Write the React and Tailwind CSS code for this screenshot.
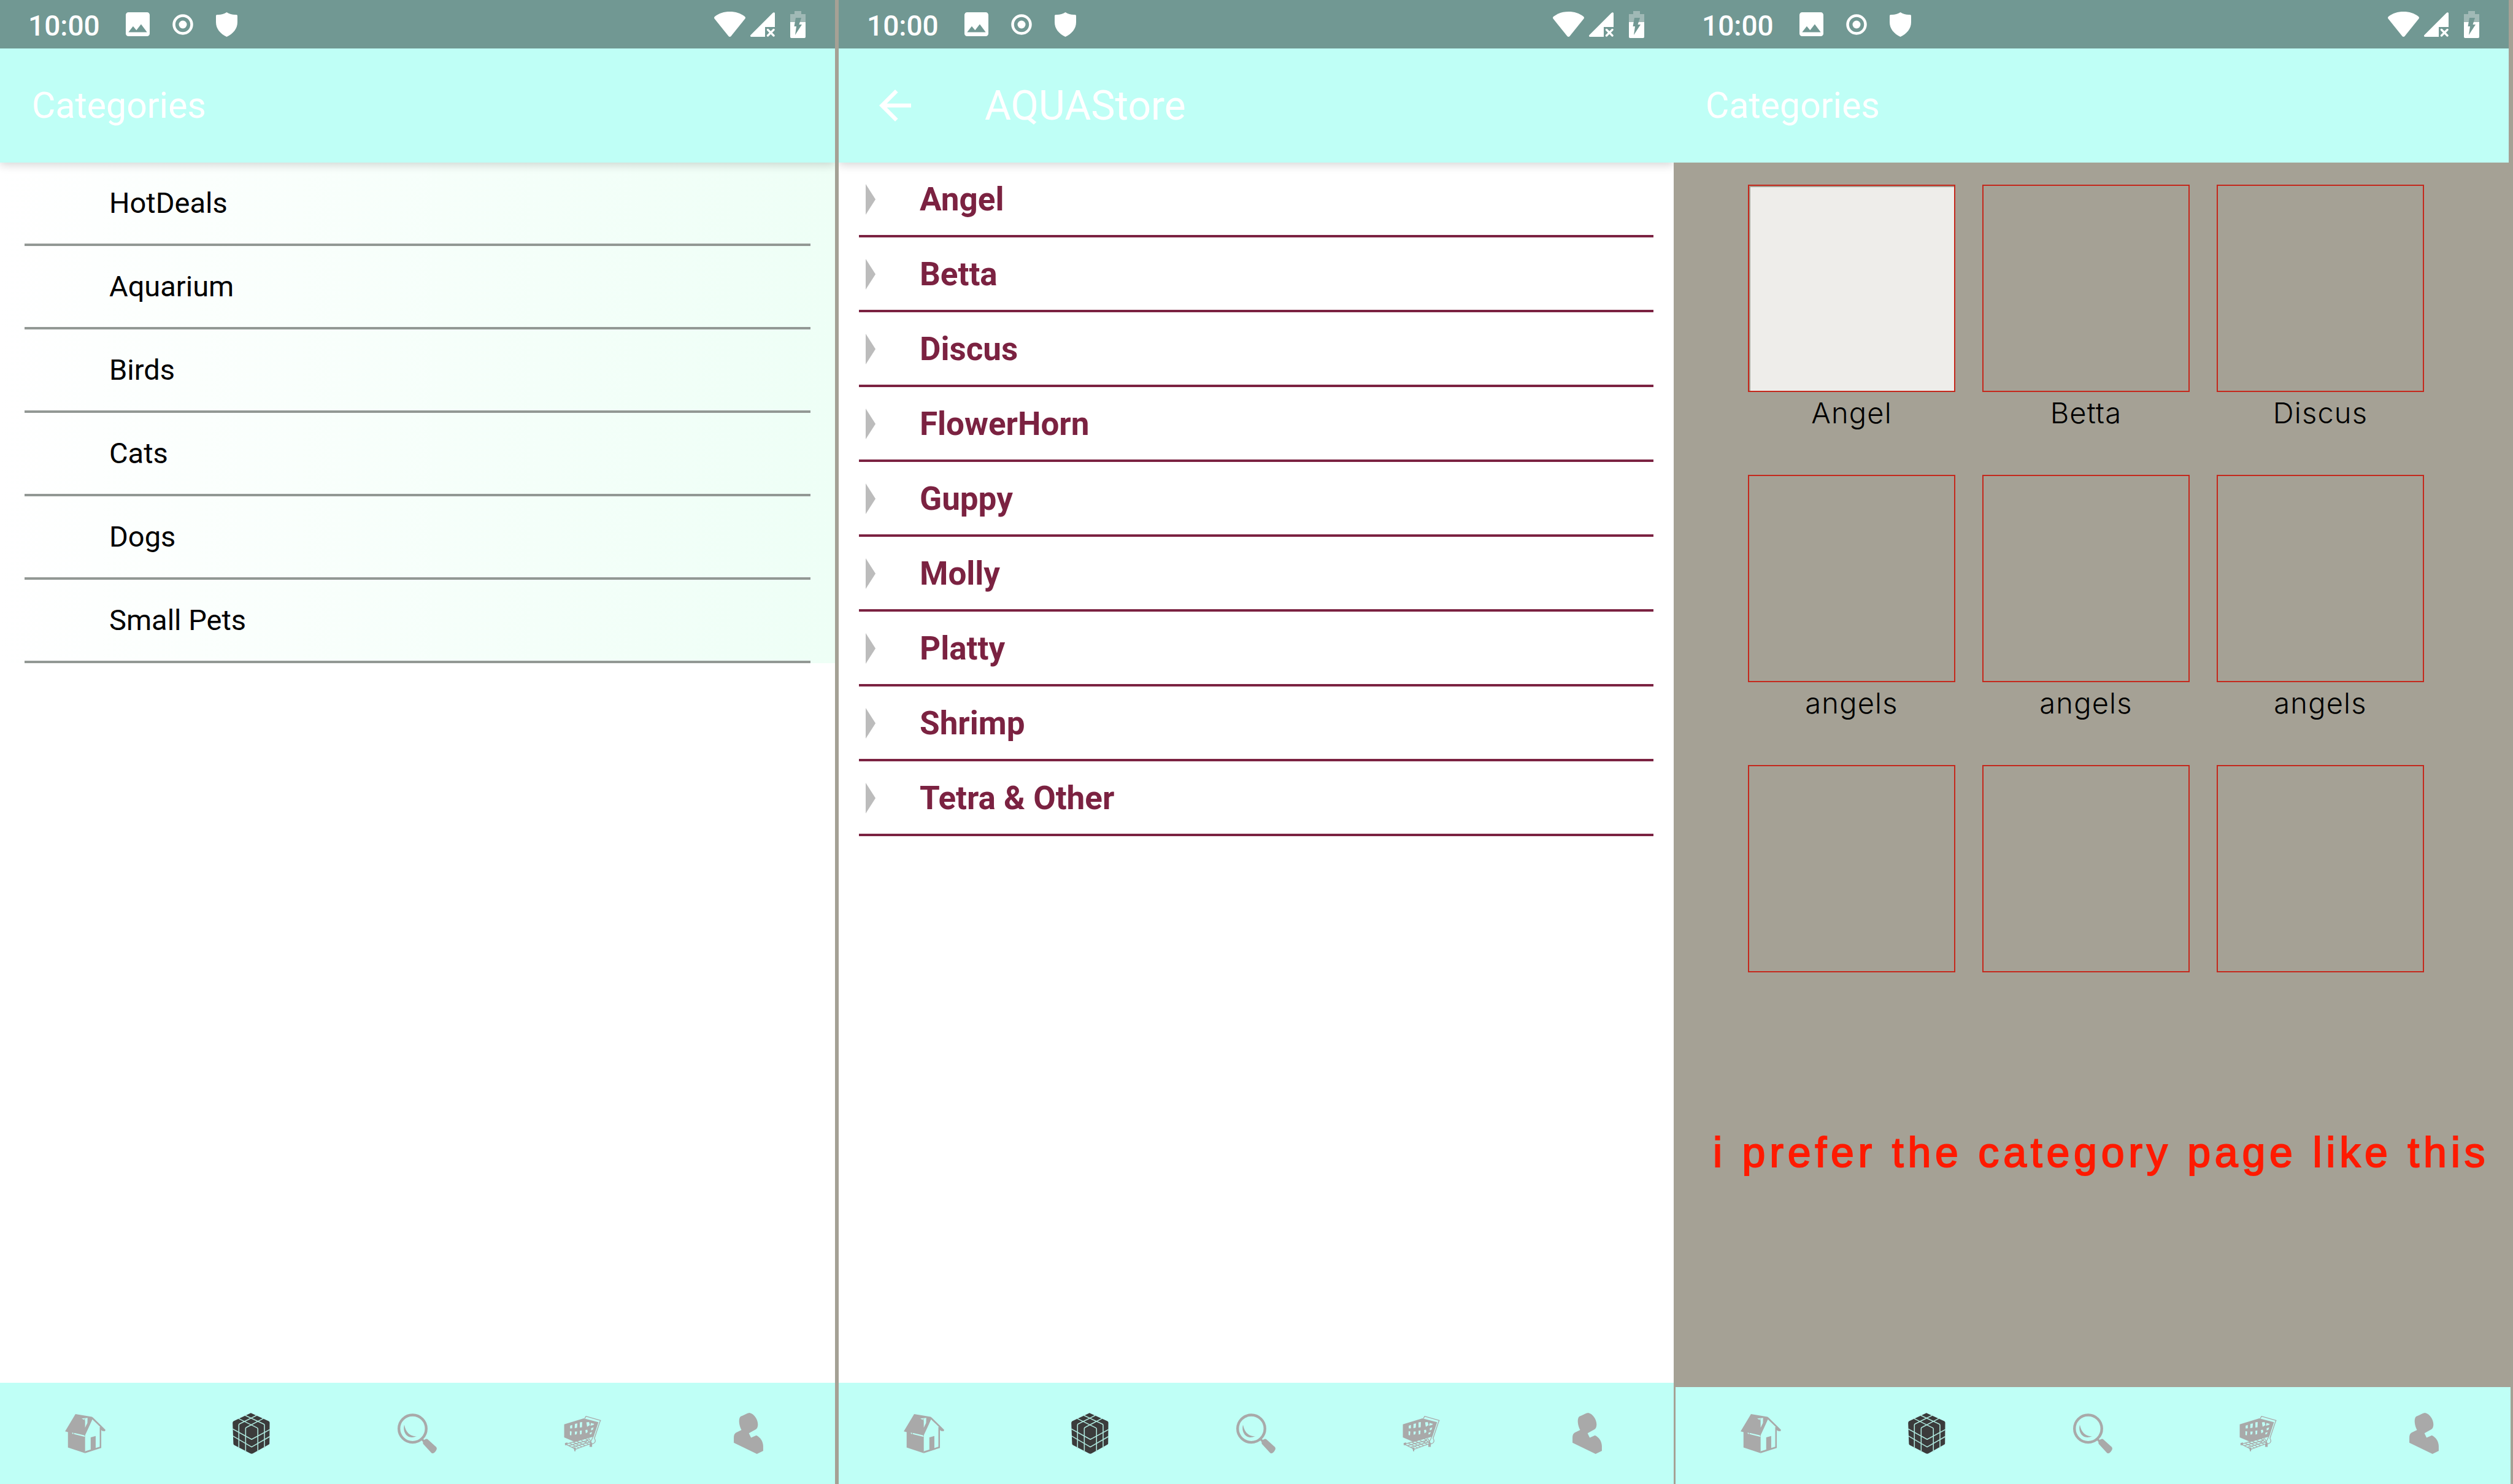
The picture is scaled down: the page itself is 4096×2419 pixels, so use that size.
import React from "react";

const stores = ["HotDeals", "Aquarium", "Birds", "Cats", "Dogs", "Small Pets"];
const fish = ["Angel", "Betta", "Discus", "FlowerHorn", "Guppy", "Molly", "Platty", "Shrimp", "Tetra & Other"];
const tiles = [
  { label: "Angel", filled: true },
  { label: "Betta" },
  { label: "Discus" },
  { label: "angels" },
  { label: "angels" },
  { label: "angels" },
  { label: "" },
  { label: "" },
  { label: "" },
];

function StatusBar() {
  return (
    <div className="flex h-[79px] shrink-0 items-center bg-[#719893] pr-12 pl-[46px] text-white">
      <span className="mr-1 pt-1 text-[46px] leading-[54px] font-medium">10:00</span>
      <div className="ml-[38px] flex items-center gap-[37px]">
        <svg className="h-[39px] w-[39px]" viewBox="3 3 18 18" fill="currentColor" aria-hidden="true">
          <path d="M21 19V5c0-1.1-.9-2-2-2H5c-1.100 0-2 .9-2 2v14c0 1.100.9 2 2 2h14c1.100 0 2-.9 2-2zM8.500 13.500l2.500 3.010L14.500 12l4.500 6H5l3.500-4.500z" />
        </svg>
        <svg className="h-[34px] w-[34px]" viewBox="0 0 34 34" aria-hidden="true">
          <circle cx="17" cy="17" r="14.500" fill="none" stroke="currentColor" strokeWidth="4.500" />
          <circle cx="17" cy="17" r="6.500" fill="currentColor" />
        </svg>
        <svg className="h-10 w-[35px]" viewBox="0 0 35 40" fill="currentColor" aria-hidden="true">
          <path d="M17.500 0C22 3 28 4.500 33 4c1.300 0 2 .7 2 2v10c0 11-7 19-17.500 24C7 35 0 27 0 16V6c0-1.300.7-2 2-2 5 .5 11-1 15.500-4z" />
        </svg>
      </div>
      <div className="ml-auto flex items-center">
        <svg className="h-[41px] w-[51px]" viewBox="0 0 51 41" fill="currentColor" aria-hidden="true">
          <path d="M1 8C8 2.500 16 0 25.500 0S43 2.500 50 8c1.200 1 1.300 2.200.4 3.400L27.500 40c-1.200 1.300-2.800 1.300-4 0L.6 11.400C-.3 10.200-.2 9 1 8z" />
        </svg>
        <svg className="ml-2 h-10 w-10" viewBox="0 0 40 40" aria-hidden="true">
          <path d="M40 2v22H24v16H2c-2 0-2.600-1.600-1.400-3L36.600 1C38-.4 40 0 40 2z" fill="currentColor" />
          <path d="M28.500 28.500l9.500 9.500M38 28.500L28.500 38" stroke="currentColor" strokeWidth="3.400" strokeLinecap="round" />
        </svg>
        <svg className="ml-[25px] h-11 w-[25px]" viewBox="0 0 25 44" aria-hidden="true">
          <path d="M0 18V5h7V0h11v5h7v13z" fill="#a0b9b6" />
          <path d="M0 18h25v24c0 1.200-.8 2-2 2H2c-1.200 0-2-.8-2-2z" fill="currentColor" />
          <path d="M9 11h9l-3.500 11H19L8 39l2-14H6.500z" fill="#719893" />
        </svg>
      </div>
    </div>
  );
}

function HomeIcon() {
  return (
    <svg className="h-16 w-[66px]" viewBox="0 0 210 204" fill="#a9a9a9" aria-hidden="true">
      <path d="M54 0l86 14 7 6 63 62-3 7-14-1-9-9-42-50-38 81-10 2-94-22z" />
      <path d="M142 28l40 38 1 104-77 22 1-82z" fill="#bffff6" />
      <path d="M15 86l89 22v95l-89-29z" />
      <path d="M180 66l8 8v102l-84 27-1-9 77-24z" />
      <path d="M133 121l26-7v66l-26 9z" />
      <path d="M86 23l31-3-1 26-12 25V31l-8-2zM37 96l6 2v6l-6-2zM47 98l52 12 5 6-3 2-54-14z" fill="#bffff6" />
      <path d="M97 26l10-2-5 5z" />
    </svg>
  );
}

function CubeIcon() {
  return (
    <svg className="h-[67px] w-[61px]" viewBox="0 0 192 212" aria-hidden="true">
      <path d="M94 1l92 42q5 3 5 8l-1 107q0 4-4 6l-82 46q-6 3-12 0L8 166q-4-2-4-6L0 52q0-6 5-9z" fill="#3b3b3b" />
      <g fill="none" stroke="#aee6dc" strokeWidth="5" strokeLinejoin="round">
        <path d="M62 12l98 46q4 2 4 6v118" />
        <path d="M28 28l98 49q4 2 4 6v117" />
        <path d="M126 12L36 57q-4 2-4 6v121" />
        <path d="M160 28L71 75q-4 2-4 6v121" />
        <path d="M0 83l98 54 94-51M2 120l96 56 94-54" />
      </g>
    </svg>
  );
}

function SearchIcon() {
  return (
    <svg className="h-[65px] w-16" viewBox="0 0 204 207" fill="#a9a9a9" aria-hidden="true">
      <circle cx="78" cy="79" r="71" fill="none" stroke="#a9a9a9" strokeWidth="14" />
      <path d="M35 59C24 99 54 140 99 118 66 121 43 99 35 59z" />
      <path d="M119 134l7-8 16 15-8 9z" />
      <path d="M138 138q8-8 17-5l45 41q5 5 3 12-7 17-19 21-5 1-9-3l-41-45q-6-9 4-21z" />
    </svg>
  );
}

function CartIcon() {
  return (
    <svg className="h-[58px] w-[61px]" viewBox="0 0 192 186" aria-hidden="true">
      <path d="M0 44L102 13l77 20-25 75-98 28-56-24z" fill="#a9a9a9" />
      <path
        d="M31 51l11-4v18l-11 1zM56 42l13-3-2 23-12 2zM82 34l12-2-1 27-11 2zM116 34l14-2 4 16-14 9zM140 37l17 5-4 5-16 4zM30 79l9 3-2 20-7-2zM56 82h12l-3 14-9 2zM82 78l10-2-1 19-8 3zM111 74l10-2 2 12-10 7zM141 64l13-4-4 12-9 4zM134 88l12-4-4 11-8 2z"
        fill="#bffff6"
      />
      <g fill="none" stroke="#a9a9a9" strokeWidth="4">
        <path d="M107 14l7-12 76 22-4 9-28 84q12 20-7 28l-12 4" />
        <path d="M174 34l-25 80-14 28M128 118l-16 20M8 148L110 118l32 26-82 30L8 148zM27 142l49 24M45 136l48 26M64 131l46 25M85 125l43 24M22 156l102-28M40 164l96-28M130 118l14 26" />
      </g>
      <path d="M4 142l13-3v12l-12 3zM49 165h12l-2 20h-5zM133 144h13v18h-13z" fill="#a9a9a9" />
    </svg>
  );
}

function PersonIcon() {
  return (
    <svg className="h-[67px] w-12" viewBox="585 230 150 210" fill="#a9a9a9" aria-hidden="true">
      <path d="M665 230C690 235 708 265 708 290 707 305 703 310 697 315L662 334 673 357 700 345C720 355 735 375 735 400V424L703 440 585 383V355C586 340 590 335 598 330L624 318C612 295 610 270 614 258 617 250 620 248 627 246L655 232Z" />
    </svg>
  );
}

const navItems = [
  { name: "Home", Icon: HomeIcon },
  { name: "Categories", Icon: CubeIcon },
  { name: "Search", Icon: SearchIcon },
  { name: "Cart", Icon: CartIcon },
  { name: "Account", Icon: PersonIcon },
];

function BottomNav({ compact = false }) {
  return (
    <nav
      className={
        compact
          ? "-mr-[3px] ml-[3px] flex h-[158px] shrink-0 bg-[#bffff6] pr-1.5 pb-[7px] pl-1"
          : "flex h-[165px] shrink-0 bg-[#bffff6] pr-1.5 pl-1"
      }
    >
      {navItems.map(({ name, Icon }) => (
        <button key={name} type="button" aria-label={name} className="flex flex-1 items-center justify-center">
          <Icon />
        </button>
      ))}
    </nav>
  );
}

function TitleBar({ title }) {
  return (
    <header className="flex h-[186px] items-center bg-[#bffff6] pl-[52px] text-white">
      <h1 className="text-[59px] leading-[70px]">{title}</h1>
    </header>
  );
}

function StoresScreen() {
  return (
    <section className="flex min-w-0 flex-1 flex-col overflow-hidden bg-white">
      <div className="relative z-10 shadow-[0_4px_14px_rgba(0,0,0,0.16)]">
        <StatusBar />
        <TitleBar title="Categories" />
      </div>
      <main className="flex-1">
        <ul className="bg-linear-to-r from-white to-[#eefff6] px-10">
          {stores.map((name) => (
            <li key={name} className="h-[136px] border-b-4 border-[#929894]">
              <button type="button" className="flex h-full w-full items-center pl-[138px] text-left text-black">
                <span className="text-[47px] leading-[56px]">{name}</span>
              </button>
            </li>
          ))}
        </ul>
      </main>
      <BottomNav />
    </section>
  );
}

function AquaScreen() {
  return (
    <section className="flex min-w-0 flex-1 flex-col overflow-hidden bg-white">
      <div className="relative z-10 shadow-[0_4px_14px_rgba(0,0,0,0.16)]">
        <StatusBar />
        <header className="flex h-[186px] items-center bg-[#bffff6] pl-[53px] text-white">
          <button type="button" aria-label="Back">
            <svg className="h-[78px] w-[78px]" viewBox="0 0 24 24" fill="currentColor" aria-hidden="true">
              <path d="M20 11H7.830l5.590-5.590L12 4l-8 8 8 8 1.410-1.410L7.830 13H20v-2z" />
            </svg>
          </button>
          <h1 className="ml-[107px] pt-0.5 text-[66px] leading-[78px]">AQUAStore</h1>
        </header>
      </div>
      <main className="flex-1">
        <ul className="px-[33px]">
          {fish.map((name) => (
            <li key={name} className="h-[122px] border-b-4 border-[#7b2241]">
              <button type="button" className="flex h-full w-full items-center pt-0.5 pl-[11px] text-left text-[#7b2241]">
                <svg className="h-[50px] w-4" viewBox="0 0 16 50" fill="#bcbcbc" aria-hidden="true">
                  <path d="M0 0l16 25L0 50z" />
                </svg>
                <span className="ml-[72px] text-[53px] leading-[62px] font-bold">{name}</span>
              </button>
            </li>
          ))}
        </ul>
      </main>
      <BottomNav />
    </section>
  );
}

function TilesScreen() {
  return (
    <section className="flex min-w-0 flex-1 flex-col">
      <StatusBar />
      <TitleBar title="Categories" />
      <main className="flex-1">
        <div className="grid grid-cols-3 gap-x-11 pt-9 pr-[138px] pl-[121px]">
          {tiles.map((tile, i) => (
            <button key={i} type="button" aria-label={tile.label || "Empty category"} className="flex flex-col text-black">
              <span className="block aspect-square w-full border-2 border-[#c4281c] pt-0.5 pl-0.5">
                {tile.filled && <span className="block h-full w-full bg-[#eeedea]" />}
              </span>
              <span className="block h-[135px] w-full pt-1 text-center font-['Inter'] text-[47px] leading-[60px] font-light tracking-wide">
                {tile.label}
              </span>
            </button>
          ))}
        </div>
        <p className="pt-[118px] pl-[64px] font-['Liberation_Sans'] text-[68px] leading-[80px] tracking-widest whitespace-nowrap text-[#ff1a00] [-webkit-text-stroke:2px_#ff1a00]">
          i prefer the category page like this
        </p>
      </main>
      <BottomNav compact />
    </section>
  );
}

export default function App() {
  return (
    <div className="flex min-h-screen bg-[#a5a195] pr-[7px] font-['Roboto',sans-serif]">
      <StoresScreen />
      <div className="w-1.5 shrink-0" />
      <AquaScreen />
      <TilesScreen />
    </div>
  );
}
